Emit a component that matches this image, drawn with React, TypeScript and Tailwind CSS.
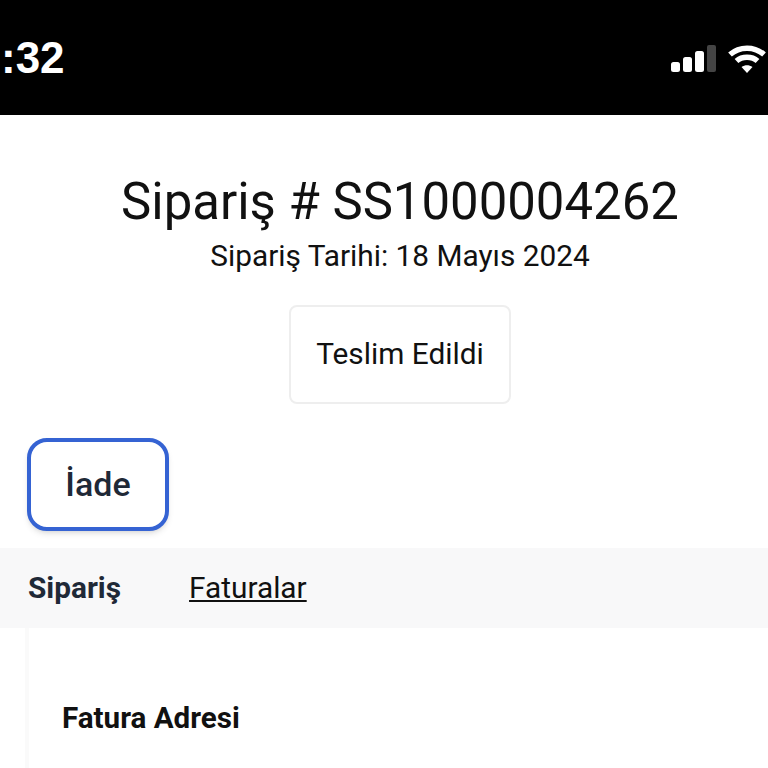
function StatusBar() {
	return (
		<div className="h-[115px] bg-black flex items-center justify-between pl-[1px] pr-[2px]">
			<span className="font-['Liberation_Sans',sans-serif] font-bold text-[44px] leading-none text-white">
				:32
			</span>
			<div className="flex items-center gap-[12px] mt-[3px]">
				<svg width="45" height="28" viewBox="0 0 45 28" fill="#fff">
					<rect x="0" y="17" width="9" height="10" rx="2.5" />
					<rect x="12" y="12" width="9" height="15" rx="2.5" />
					<rect x="24" y="6" width="9" height="21" rx="2.5" />
					<rect x="36" y="0" width="9" height="27" rx="2" fill="#444" />
				</svg>
				<svg width="38" height="28" viewBox="0 0 38 28" fill="none" stroke="#fff" strokeWidth="5.5">
					<path d="M2 9.5C11.5 1 26.5 1 36 9.5" />
					<path d="M8.5 16C14 11 24 11 29.5 16" />
					<path d="M13.5 22L19 28L24.5 22C21 19.5 17 19.5 13.5 22Z" fill="#fff" stroke="none" />
				</svg>
			</div>
		</div>
	);
}

export default function App() {
	return (
		<div className="h-[768px] overflow-hidden bg-white font-['Roboto',sans-serif]">
			<StatusBar />
			<div className="flex flex-col items-center pl-[32px] pt-[57px]">
				<h1 className="text-[50.9px] leading-[60px] text-[#111]">Sipariş # SS1000004262</h1>
				<p className="text-[29.8px] leading-[36px] mt-[6px] text-[#111]">Sipariş Tarihi: 18 Mayıs 2024</p>
				<div className="mt-[31px] w-[222px] h-[99px] flex items-center justify-center border-2 border-[#eeeeee] rounded-[8px] text-[29.8px] text-[#111]">
					Teslim Edildi
				</div>
			</div>
			<div className="pl-[27px] mt-[34px]">
				<button className="block w-[142px] h-[93px] border-[4px] border-[#3563d3] rounded-[20px] shadow-md text-[34px] font-medium text-[#1f2937] bg-white">
					İade
				</button>
			</div>
			<div className="mt-[17px] h-[80px] bg-[#f8f8f9] flex items-center pl-[28px] gap-[68px] text-[29.8px] text-[#1f2937]">
				<span className="font-bold">Sipariş</span>
				<a className="underline text-[#111]">Faturalar</a>
			</div>
			<div className="ml-[25px] border-l-4 border-[#fafafa] pl-[33px] pt-[72px] h-[200px]">
				<h2 className="text-[29.6px] leading-[36px] font-bold text-[#111]">Fatura Adresi</h2>
			</div>
		</div>
	);
}
